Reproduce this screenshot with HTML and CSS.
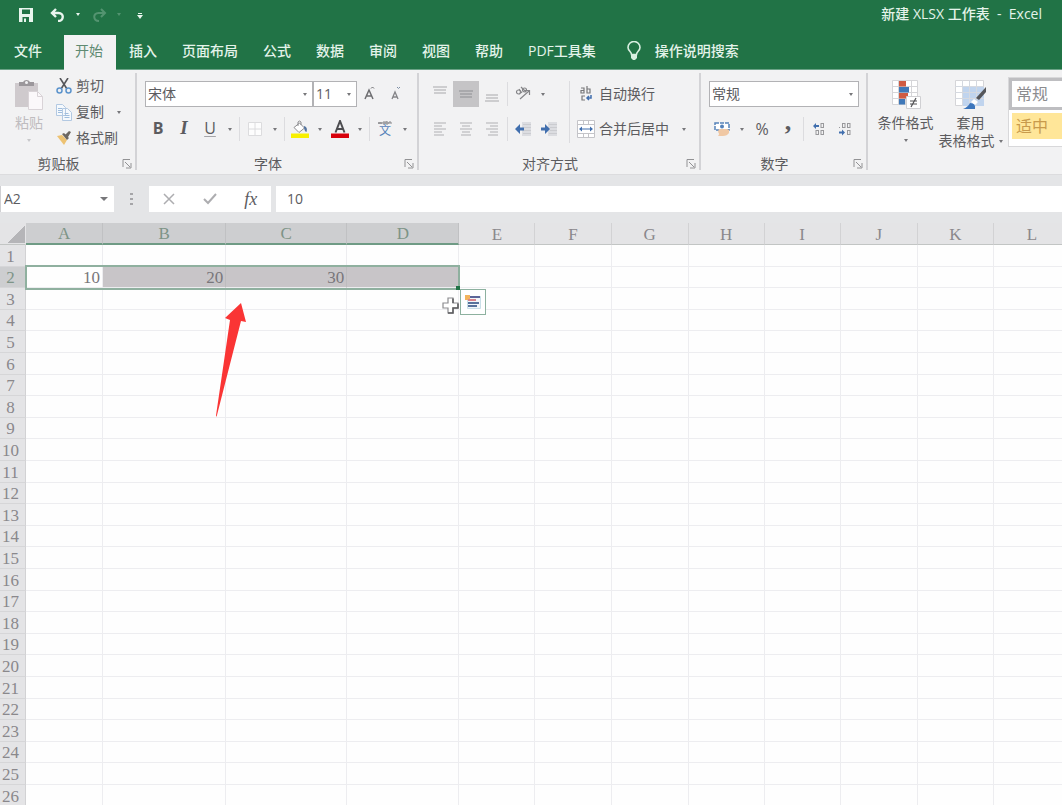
FILE: index.html
```html
<!DOCTYPE html>
<html lang="zh-CN">
<head>
<meta charset="utf-8">
<title>新建 XLSX 工作表 - Excel</title>
<link rel="stylesheet" href="styles.css">
</head>
<body>
<header class="titlebar">
  <div class="quick">
    <button class="quick-btn" aria-label="保存"><svg width="14" height="14" viewBox="0 0 14 14"><path fill="#e9f5ee" fill-rule="evenodd" d="M0 0h14v14H0zM3 1.500v4.500h8V1.500zM3.500 9v5H10V9z"/><path fill="#e9f5ee" d="M5 10.500h2V14H5z"/></svg></button>
    <button class="quick-btn" aria-label="撤消"><svg width="16" height="14" viewBox="0 0 16 14"><path fill="none" stroke="#e9f5ee" stroke-width="2.400" d="M6 1 2 5l4 4M2 5h6.500c6 0 5.500 8-.5 8"/></svg></button>
    <button class="quick-caret caret" aria-label="撤消列表"></button>
    <button class="quick-btn faded" aria-label="恢复"><svg width="16" height="14" viewBox="0 0 16 14"><path fill="none" stroke="#e9f5ee" stroke-width="2" d="M10 1l4 4-4 4M14 5H7.500C1.500 5 2 13 8 13"/></svg></button>
    <button class="quick-caret caret faded" aria-label="恢复列表"></button>
    <button class="quick-custom" aria-label="自定义快速访问工具栏"><svg width="6" height="6" viewBox="0 0 6 6"><path fill="#e9f5ee" d="M1 0h4v1H1zM0 2h6L3 6z"/></svg></button>
  </div>
  <div class="doc-title">新建 XLSX 工作表&nbsp; -&nbsp; Excel</div>
</header>
<nav class="tabs">
  <button class="tab file">文件</button>
  <button class="tab active">开始</button>
  <button class="tab">插入</button>
  <button class="tab">页面布局</button>
  <button class="tab">公式</button>
  <button class="tab">数据</button>
  <button class="tab">审阅</button>
  <button class="tab">视图</button>
  <button class="tab">帮助</button>
  <button class="tab">PDF工具集</button>
  <button class="tab tell"><svg width="14" height="20" viewBox="0 0 14 20"><path fill="none" stroke="#d8efe1" stroke-width="1.600" d="M4.500 13.500C4.500 10.500 1 10 1 6.500a6 6 0 0 1 12 0c0 3.500-3.500 4-3.500 7z"/><path fill="#d8efe1" d="M4 14h6v3L8 19H6l-2-2z"/></svg>操作说明搜索</button>
</nav>

<section class="ribbon">
  <div class="group clipboard">
    <div class="group-body">
      <button class="paste"><svg width="30" height="32" viewBox="0 0 30 32"><path fill="#cfcacd" d="M1 4h23v24H1z"/><path fill="#9b979b" d="M5 3h4a4 4 0 0 1 7 0h4v4H5z"/><circle cx="12.500" cy="3.500" r="1.500" fill="#f2f2f3"/><path fill="#fbf8fa" stroke="#d9d3d7" d="M14.500 12.500h9l5 5v13h-14z"/><path fill="none" stroke="#d9d3d7" d="M23.500 12.500v5h5"/></svg><span>粘贴</span><i class="caret"></i></button>
      <div class="stack">
        <button class="cmd"><svg width="16" height="16" viewBox="0 0 16 16"><path fill="none" stroke="#55565a" stroke-width="1.600" d="M4 0l7 11M12 0 5 11"/><g fill="none" stroke="#5b93cc" stroke-width="1.500"><circle cx="3.500" cy="12.500" r="2.500"/><circle cx="12.500" cy="12.500" r="2.500"/></g></svg>剪切</button>
        <button class="cmd"><svg width="16" height="17" viewBox="0 0 16 17"><path fill="#f5f9fd" stroke="#b3c9e2" d="M.5.500h6l3 3v8h-9zM6.500 4.500h5l4 4v8h-9z"/><path stroke="#9fbddd" d="M2 4.500h4M2 6.500h4M2 8.500h4M8.500 9.500h4M8.500 11.500h5M8.500 13.500h5"/></svg>复制<i class="caret"></i></button>
        <button class="cmd"><svg width="16" height="14" viewBox="0 0 16 14"><path fill="#edc272" d="M1 5l5-1 5 5-3 5z"/><path fill="#6c6762" d="M6 3l2-1 5 5-2 2zM9 4l4-4 2 1-3 5z"/></svg>格式刷</button>
      </div>
    </div>
    <div class="group-foot"><span>剪贴板</span><button class="launch" aria-label="剪贴板设置"><svg width="10" height="10" viewBox="0 0 10 10"><path fill="none" stroke="#929294" d="M1 8V.500h7M3 3l5 5M9 4v5H4"/></svg></button></div>
  </div>

  <div class="group font">
    <div class="group-body rows">
      <div class="row">
        <label class="combo family"><select aria-label="字体"><option>宋体</option></select></label>
        <label class="combo size"><select aria-label="字号"><option>11</option></select></label>
        <button class="tool" aria-label="增大字号"><svg width="16" height="16" viewBox="0 0 16 16"><path fill="none" stroke="#6d6d70" stroke-width="1.500" d="M3 13 7 4l4 9M4.500 10h5"/><path fill="none" stroke="#6d6d70" d="M9 2.500l1.500-1.500 1.500 1.500"/></svg></button>
        <button class="tool" aria-label="减小字号"><svg width="16" height="16" viewBox="0 0 16 16"><path fill="none" stroke="#858588" stroke-width="1.300" d="M4 13l3-7 3 7M5 11h4"/><path fill="none" stroke="#7c8ea6" d="M9 1l1.500 1.500L12 1"/></svg></button>
      </div>
      <div class="row">
        <button class="tool letter bold">B</button>
        <button class="tool letter italic">I</button>
        <button class="tool letter under">U</button>
        <button class="drop caret" aria-label="下划线类型"></button>
        <i class="sep"></i>
        <button class="tool" aria-label="边框"><svg width="16" height="16" viewBox="0 0 16 16"><path fill="#fdfdfd" stroke="#dcdcde" d="M1.500 1.500h13v13h-13zM8 2v12M2 8h12"/></svg></button>
        <button class="drop caret" aria-label="边框类型"></button>
        <i class="sep"></i>
        <button class="tool" aria-label="填充颜色"><svg width="18" height="18" viewBox="0 0 18 18"><path fill="#fff" stroke="#8d8d90" d="M3 7.500 8.500 3l5 5-5.500 4.500z"/><path fill="none" stroke="#8d8d90" d="M7 6V2q1.500-2 3 0v3"/><path fill="#54749e" d="M13 6q4 1 2.500 6Q14 12 13 8z"/><path fill="#f8f000" d="M0 13.500h18V18H0z"/></svg></button>
        <button class="drop caret" aria-label="选择填充颜色"></button>
        <button class="tool" aria-label="字体颜色"><svg width="18" height="18" viewBox="0 0 18 18"><path fill="none" stroke="#4d4d50" stroke-width="2" d="M4.500 12.500 9 1l4.500 11.500M6 9h6"/><path fill="#d8000c" d="M0 13.500h18V18H0z"/></svg></button>
        <button class="drop caret" aria-label="选择字体颜色"></button>
        <i class="sep"></i>
        <button class="tool pinyin" aria-label="显示拼音"><svg width="14" height="4" viewBox="0 0 14 4"><path fill="none" stroke="#858588" d="M0 1l1 2 1-2 1 2 1-2M5 1h2v2H5zM8 0v3h2V1H8M11 3V1h2v2"/></svg><span>文</span></button>
        <button class="drop caret" aria-label="拼音选项"></button>
      </div>
    </div>
    <div class="group-foot"><span>字体</span><button class="launch" aria-label="字体设置"><svg width="10" height="10" viewBox="0 0 10 10"><path fill="none" stroke="#929294" d="M1 8V.500h7M3 3l5 5M9 4v5H4"/></svg></button></div>
  </div>

  <div class="group align">
    <div class="group-body split">
      <div class="rows">
        <div class="row">
          <button class="tool" aria-label="顶端对齐"><svg width="14" height="16" viewBox="0 0 14 16"><path stroke="#cdcdcf" stroke-width="2" d="M0 1h14M1 4h12M1 7h12"/></svg></button>
          <button class="tool pressed" aria-label="垂直居中"><svg width="14" height="16" viewBox="0 0 14 16"><path stroke="#a9a9ac" stroke-width="2" d="M0 5h14M1 8h12M1 11h12"/></svg></button>
          <button class="tool" aria-label="底端对齐"><svg width="14" height="16" viewBox="0 0 14 16"><path stroke="#cdcdcf" stroke-width="2" d="M1 9h12M1 12h12M0 15h14"/></svg></button>
          <i class="sep"></i>
          <button class="tool" aria-label="方向"><svg width="16" height="16" viewBox="0 0 16 16"><g fill="none" stroke="#858588" stroke-width="1.200"><circle cx="3.500" cy="6" r="2"/><path d="M4 3l3 4M6 1l5 5"/><circle cx="9.500" cy="4" r="2"/><path d="M5 13l9-8M10 4.500h4.500V9"/></g></svg></button>
          <button class="drop caret" aria-label="方向选项"></button>
        </div>
        <div class="row">
          <button class="tool" aria-label="左对齐"><svg width="14" height="14" viewBox="0 0 14 14"><path stroke="#c6c6c9" stroke-width="1.500" d="M1 1h12M1 4h8M1 7h12M1 10h8M1 13h10"/></svg></button>
          <button class="tool" aria-label="居中"><svg width="14" height="14" viewBox="0 0 14 14"><path stroke="#c6c6c9" stroke-width="1.500" d="M1 1h12M3 4h8M1 7h12M3 10h8M2 13h10"/></svg></button>
          <button class="tool" aria-label="右对齐"><svg width="14" height="14" viewBox="0 0 14 14"><path stroke="#c6c6c9" stroke-width="1.500" d="M1 1h12M5 4h8M1 7h12M5 10h8M3 13h10"/></svg></button>
          <i class="sep"></i>
          <button class="tool" aria-label="减少缩进"><svg width="16" height="14" viewBox="0 0 16 14"><path fill="#dcdde1" d="M7 0h9v14H7z"/><path stroke="#cbccd0" d="M8 2.500h8M9 5.500h7M9 8.500h7M8 11.500h8"/><path fill="#416fae" d="M0 7l5-5v3.500h4v3H5V12z"/></svg></button>
          <button class="tool" aria-label="增加缩进"><svg width="16" height="14" viewBox="0 0 16 14"><path fill="#dcdde1" d="M7 0h9v14H7z"/><path stroke="#cbccd0" d="M8 2.500h8M9 5.500h7M9 8.500h7M8 11.500h8"/><path fill="#416fae" d="M9 7 4 2v3.500H0v3h4V12z"/></svg></button>
        </div>
      </div>
      <i class="sep tall"></i>
      <div class="rows">
        <button class="row cmd wrap"><svg width="16" height="16" viewBox="0 0 16 16"><g fill="none" stroke="#77777a" stroke-width="1.200"><path d="M3 2h3v5H3V4.500h3M9 0v7h3V3H9M7 10H4v4h3"/></g><path fill="none" stroke="#416fae" stroke-width="1.500" d="M13 9v3H9M11 10l-2 2 2 2"/></svg>自动换行</button>
        <button class="row cmd wrap"><svg width="18" height="18" viewBox="0 0 18 18"><path fill="#fff" stroke="#c4c4c8" d="M.5.500h17v17H.5zM1 4.500h16M1 13.500h16M6.500 1v3M11.500 1v3M6.500 14v3M11.500 14v3"/><path fill="#416fae" d="M2 9l3-2.500v5zM16 9l-3-2.500v5zM5 8.500h8v1H5z"/></svg>合并后居中<i class="caret"></i></button>
      </div>
    </div>
    <div class="group-foot"><span>对齐方式</span><button class="launch" aria-label="对齐设置"><svg width="10" height="10" viewBox="0 0 10 10"><path fill="none" stroke="#929294" d="M1 8V.500h7M3 3l5 5M9 4v5H4"/></svg></button></div>
  </div>

  <div class="group number">
    <div class="group-body rows">
      <div class="row"><label class="combo format"><select aria-label="数字格式"><option>常规</option></select></label></div>
      <div class="row">
        <button class="tool" aria-label="会计数字格式"><svg width="18" height="16" viewBox="0 0 18 16"><path fill="#fff" stroke="#5682b9" stroke-width="1.500" stroke-dasharray="4 1" d="M2 2h14v7H2z"/><circle cx="9" cy="5.500" r="2" fill="#5682b9"/><path fill="#f0c8a4" d="M6 8h8l2 1v3q-2 3-6 3H5q2-2 0-4z"/></svg></button>
        <button class="drop caret" aria-label="货币选项"></button>
        <button class="tool letter percent">%</button>
        <button class="tool letter comma">,</button>
        <i class="sep"></i>
        <button class="tool" aria-label="增加小数位数"><svg width="12" height="14" viewBox="0 0 12 14"><path fill="#416fae" d="M0 4l3-3v2h3v2H3v2z"/><g fill="none" stroke="#98989b"><rect x="8" y="1.500" width="2.500" height="4"/><rect x="3" y="8.500" width="2.500" height="4"/><rect x="8" y="8.500" width="2.500" height="4"/></g></svg></button>
        <button class="tool" aria-label="减少小数位数"><svg width="14" height="14" viewBox="0 0 14 14"><path fill="#416fae" d="M7 10.500 4 7.500v2H1v2h3v2z"/><g fill="none" stroke="#98989b"><rect x="4.500" y="1.500" width="2.500" height="4"/><rect x="9.500" y="1.500" width="2.500" height="4"/><rect x="9.500" y="8.500" width="2.500" height="4"/><path d="M1.500 5v1"/></g></svg></button>
      </div>
    </div>
    <div class="group-foot"><span>数字</span><button class="launch" aria-label="数字设置"><svg width="10" height="10" viewBox="0 0 10 10"><path fill="none" stroke="#929294" d="M1 8V.500h7M3 3l5 5M9 4v5H4"/></svg></button></div>
  </div>

  <div class="styles">
    <button class="big"><svg width="30" height="30" viewBox="0 0 30 30"><path fill="#fff" stroke="#d5d5d8" d="M1.500.500h25v24h-25zM7.500 0v25M14.500 0v25M20.500 0v25M1 6.500h26M1 12.500h26M1 18.500h26"/><path fill="#cf5b42" d="M8 1h7v5.500H8zM8 13h9v5.500H8z"/><path fill="#3f78b8" d="M8 7h10v5.500H8zM8 19h6v5.500H8z"/><path fill="#fff" stroke="#d0d0d3" d="M15.500 16.500h14v12h-14z"/><path fill="none" stroke="#505053" stroke-width="1.200" d="M19 21h7M19 24h7M25 18l-5 9"/></svg><span>条件格式</span><i class="caret"></i></button>
    <button class="big"><svg width="32" height="30" viewBox="0 0 32 30"><path fill="#fff" stroke="#d5d5d8" d="M.5.500h28v25H.5z"/><path fill="#c0d4ee" d="M8 7h21v19H8z"/><path fill="none" stroke="#d5d9e0" d="M7.500 0v26M14.500 0v26M21.500 0v26M0 6.500h29M0 12.500h29M0 18.500h29"/><path fill="#55565a" d="M31 7v5l-7 8-3-2z"/><path fill="#fff" d="M19 19l4 3-3 3-4-3z"/><path fill="#3d76bc" d="M8 29q5-2 7-6 6 0 5 6z"/></svg><span>套用</span><span class="second">表格格式<i class="caret"></i></span></button>
    <div class="gallery">
      <button class="style normal">常规</button>
      <button class="style neutral">适中</button>
    </div>
  </div>
</section>

<section class="formula-bar">
  <label class="namebox"><input type="text" value="A2" aria-label="名称框"><i class="caret"></i></label>
  <i class="grip"></i>
  <div class="formula-tools">
    <button aria-label="取消"><svg width="12" height="12" viewBox="0 0 12 12"><path stroke="#adadb0" stroke-width="1.500" d="M1 1l10 10M11 1 1 11"/></svg></button>
    <button aria-label="输入"><svg width="14" height="12" viewBox="0 0 14 12"><path fill="none" stroke="#adadb0" stroke-width="2" d="M1 6l4 4 8-9"/></svg></button>
    <button class="fx" aria-label="插入函数">fx</button>
  </div>
  <input class="formula" type="text" value="10" aria-label="编辑栏">
</section>

<main class="sheet">
  <table class="grid">
    <colgroup><col class="c-head"><col class="c-a"><col class="c-b"><col class="c-c"><col class="c-d"><col><col><col class="odd"><col><col><col class="odd"><col><col class="odd"></colgroup>
    <thead><tr><th class="corner" aria-label="全选"></th><th class="on">A</th><th class="on">B</th><th class="on">C</th><th class="on">D</th><th>E</th><th>F</th><th>G</th><th>H</th><th>I</th><th>J</th><th>K</th><th>L</th></tr></thead>
    <tbody id="rows"></tbody>
  </table>
  <div class="selection"><i class="handle"></i></div>
  <svg class="cursor" width="17" height="17" viewBox="0 0 17 17"><path fill="#fff" stroke="#8c8c8f" stroke-width="1.200" d="M6 1h5v5h5v5h-5v5H6v-5H1V6h5z"/><path fill="none" stroke="#5c5c5f" stroke-width="1.500" d="M11 1.500V6M16 6.500V11h-5v5H6"/></svg>
  <button class="analysis" aria-label="快速分析"><svg width="16" height="16" viewBox="0 0 16 16"><path fill="#f2f6fa" stroke="#c9dfe8" d="M2.500 2.500h13v12h-13z"/><path fill="#f3b35d" d="M0 1h5v5H0z"/><path stroke="#5c6699" stroke-width="2" d="M5 3h10"/><path stroke="#d9828a" stroke-width="2" d="M3 6h8"/><path stroke="#58729c" stroke-width="2" d="M3 9h11M3 12h9"/></svg></button>
  <svg class="arrow" width="32" height="116" viewBox="0 0 32 116"><path fill="#fa3535" d="M26 0l5 19-5-1L1.500 114 1 112.500 15 17l-5-2z"/></svg>
</main>
<script src="sheet.js"></script>
</body>
</html>
```
FILE: styles.css
```css
* { box-sizing: border-box; }
html, body { height: 100%; }
body {
  margin: 0;
  display: flex;
  flex-direction: column;
  overflow: hidden;
  background: #fefefe;
  color: #5c5c5f;
  font: 14px/18px "Open Sans", "Noto Sans CJK SC", sans-serif;
}
button, input, select { font: inherit; color: inherit; border: 0; margin: 0; padding: 0; background: none; border-radius: 0; }
button { display: flex; align-items: center; justify-content: center; white-space: nowrap; }
svg { display: block; flex: none; }

.caret::before {
  content: "";
  display: block;
  border: 2px solid transparent;
  border-top: 3px solid #77777a;
  border-bottom: 0;
}

/* Title bar and tabs */
.titlebar { flex: none; height: 35px; padding: 0 20px 6px 18px; display: flex; align-items: center; justify-content: space-between; background: #217346; color: #e4f3ea; }
.quick { display: flex; align-items: center; }
.quick-btn { width: 16px; height: 20px; margin-right: 16px; }
.quick-caret { width: 8px; height: 16px; margin: 0 9px 0 -8px; }
.quick .caret::before { border-top-color: #e9f5ee; }
.quick-custom { width: 12px; height: 16px; margin: 2px 0 0 2px; }
.quick .faded { opacity: 0.25; }
.doc-title { font-weight: 500; padding-bottom: 2px; }
.tabs { flex: none; height: 34px; display: flex; gap: 1px; background: #217346; }
.tab { padding: 0 12px 2px; color: #e4f3ea; font-weight: 500; }
.tab.file { padding: 0 21px 2px 14px; }
.tab.active { margin-bottom: -1px; padding: 0 13px 3px 11px; z-index: 1; background: #f2f2f3; color: #5f8a72; font-weight: 400; }
.tab.tell { gap: 14px; padding-left: 18px; }

/* Ribbon */
.ribbon { flex: none; height: 106px; display: flex; overflow: hidden; background: #f2f2f3; border-top: 1px solid #6ba286; border-bottom: 1px solid #dcdcde; padding-top: 3px; }
.group { flex: none; display: flex; flex-direction: column; background: linear-gradient(#d3d3d6, #d3d3d6) right top / 2px 97px no-repeat; }
.group-body { flex: none; height: 80px; padding: 8px 0 0 8px; }
.rows { display: flex; flex-direction: column; gap: 9px; }
.row { display: flex; align-items: center; height: 26px; }
.group-foot { flex: none; display: flex; align-items: center; height: 21px; text-align: center; }
.group-foot span { flex: 1; }
.launch { width: 20px; height: 18px; }
.clipboard { width: 137px; }
.font, .align { width: 282px; }
.number { width: 167px; }

.clipboard .group-body { display: flex; padding: 0 0 0 14px; }
.paste { flex-direction: column; justify-content: flex-start; width: 30px; padding-top: 6px; color: #bfbcbf; }
.paste span { margin: 3px 0 7px; }
.paste .caret::before { border-top-color: #c8c8ca; }
.stack { padding-left: 12px; }
.cmd { height: 26px; gap: 4px; }
.cmd .caret { margin-left: 9px; }

.tool { width: 26px; height: 26px; flex: none; }
.drop { width: 14px; height: 26px; flex: none; }
.sep { flex: none; width: 1px; height: 24px; margin: 0 2px; background: #dcdcdf; }
.pressed { background: #c5c4c6; }
.combo { position: relative; display: flex; height: 26px; background: #fff; border: 1px solid #b2b2b5; }
.combo select { width: 100%; appearance: none; padding-left: 2px; }
.combo::after { content: ""; position: absolute; right: 5px; top: 11px; border: 2px solid transparent; border-top: 3px solid #77777a; border-bottom: 0; pointer-events: none; }
.family { width: 168px; }
.size { width: 44px; }
.format { width: 150px; }
.letter { font-size: 16px; padding-bottom: 3px; }
.bold { font-weight: 700; }
.italic { font: italic 700 19px/20px "Liberation Serif", serif; }
.under { text-decoration: underline; text-decoration-color: #a5a5a8; text-underline-offset: 2px; }
.percent { padding-bottom: 1px; }
.comma { font: 700 26px/10px "Liberation Serif", serif; padding-bottom: 15px; }
.pinyin { flex-direction: column; }
.pinyin span { font-size: 12px; line-height: 12px; color: #5682b9; }
.split { display: flex; }
.tall { height: 62px; margin: 0 3px 0 5px; }
.split .rows:first-child { width: 137px; }
.wrap { justify-content: flex-start; padding-left: 4px; }
.wrap svg { width: 18px; }

.styles { flex: 1 0 auto; display: flex; padding-left: 5px; }
.big { flex-direction: column; justify-content: flex-start; width: 65px; padding-top: 7px; line-height: 18px; }
.big span { margin-top: 4px; }
.big > .caret { margin-top: 7px; }
.big .second { display: flex; align-items: center; gap: 4px; margin: 0; }
.gallery { flex: 1; min-width: 120px; height: 70px; margin: 4px 0 0 5px; background: #fff; border: 1px solid #d8d8da; border-right: 0; }
.style { width: 100%; justify-content: flex-start; font-size: 16px; }
.normal { height: 32px; padding-left: 4px; border: 3px solid #bebec1; color: #8c8c8f; }
.neutral { height: 26px; margin: 3px 0 0 3px; padding-left: 4px; background: #ffe699; color: #c89a4c; }

/* Formula bar */
.formula-bar { flex: none; display: flex; height: 48px; padding: 11px 0; background: #e4e5e7; }
.namebox { display: flex; align-items: center; width: 114px; padding: 0 6px 0 3px; border-left: 1px solid #d0d0d3; background: #fff; }
.namebox input { flex: 1; min-width: 0; }
.namebox .caret::before { border-width: 4px 4px 0; }
.grip { width: 3px; height: 13px; margin: 7px 16px; background: repeating-linear-gradient(#a5a5a8 0 2px, transparent 2px 5px); }
.formula-tools { display: flex; width: 122px; background: #fff; }
.formula-tools button { flex: 1; }
.formula-tools .fx { font: italic 18px/20px "Liberation Serif", serif; }
.formula { flex: 1; min-width: 0; margin-left: 5px; padding-left: 11px; background: #fff; }

/* Sheet */
.sheet { flex: 1; min-height: 0; position: relative; overflow: hidden; }
.grid { table-layout: fixed; width: 1071px; min-width: 100%; border-collapse: separate; border-spacing: 0; font: 17px/18px "Liberation Serif", serif; color: #78767a; }
.grid col { width: 76px; }
.grid .odd { width: 77px; }
.grid .c-head { width: 26px; }
.grid .c-a { width: 77px; }
.grid .c-b { width: 123px; }
.grid .c-c { width: 121px; }
.grid .c-d { width: 112px; }
.grid tr { height: 22px; }
.grid tbody tr:nth-child(5n+2), .grid tbody tr:nth-child(5n+4) { height: 21px; }
.grid th { padding: 2px 0 0; font-weight: 400; background: #e4e4e6; color: #8a888c; border-right: 1px solid #d2d2d4; border-bottom: 1px solid #c2c5c4; }
.grid thead th { padding-top: 3px; }
.grid thead .on { padding-top: 2px; background: #cdced0; color: #7d9487; border-bottom: 2px solid #6f9b85; border-right-color: #c0c1c3; }
.grid thead .corner { background: linear-gradient(135deg, #e4e4e6 50%, #b5b5b8 50%) 7px 2px / 18px 18px no-repeat #e4e4e6; border-right-color: #e4e4e6; }
.grid tbody th { padding-right: 4px; border-bottom-color: #d6d6d8; }
.grid tbody th.on { background: #cdced0; color: #7d9487; }
.grid td { padding: 2px 2px 0 0; text-align: right; border-right: 1px solid #ededf0; border-bottom: 1px solid #ededf0; }
.grid td.picked { background: #c8c5c8; border-right-color: #bdbcbe; }
.selection { position: absolute; left: 25px; top: 42px; width: 435px; height: 25px; border: 2px solid #8fb09f; }
.handle { position: absolute; right: -2px; bottom: -2px; width: 4px; height: 4px; background: #217346; }
.cursor { position: absolute; left: 442px; top: 74px; }
.analysis { position: absolute; left: 460px; top: 66px; width: 26px; height: 26px; border: 1px solid #8db19f; background: #fff; }
.arrow { position: absolute; left: 215px; top: 80px; }
```
FILE: sheet.js
```js
const data = { 2: ["10", "20", "30", ""] };
const columns = 12;
const rows = 26;
const body = document.getElementById("rows");
for (let r = 1; r <= rows; r++) {
  const tr = body.insertRow();
  const head = document.createElement("th");
  head.textContent = r;
  if (data[r]) head.className = "on";
  tr.append(head);
  for (let c = 0; c < columns; c++) {
    const td = tr.insertCell();
    if (data[r] && c < data[r].length) {
      td.textContent = data[r][c];
      if (c > 0) td.className = "picked";
    }
  }
}
```
